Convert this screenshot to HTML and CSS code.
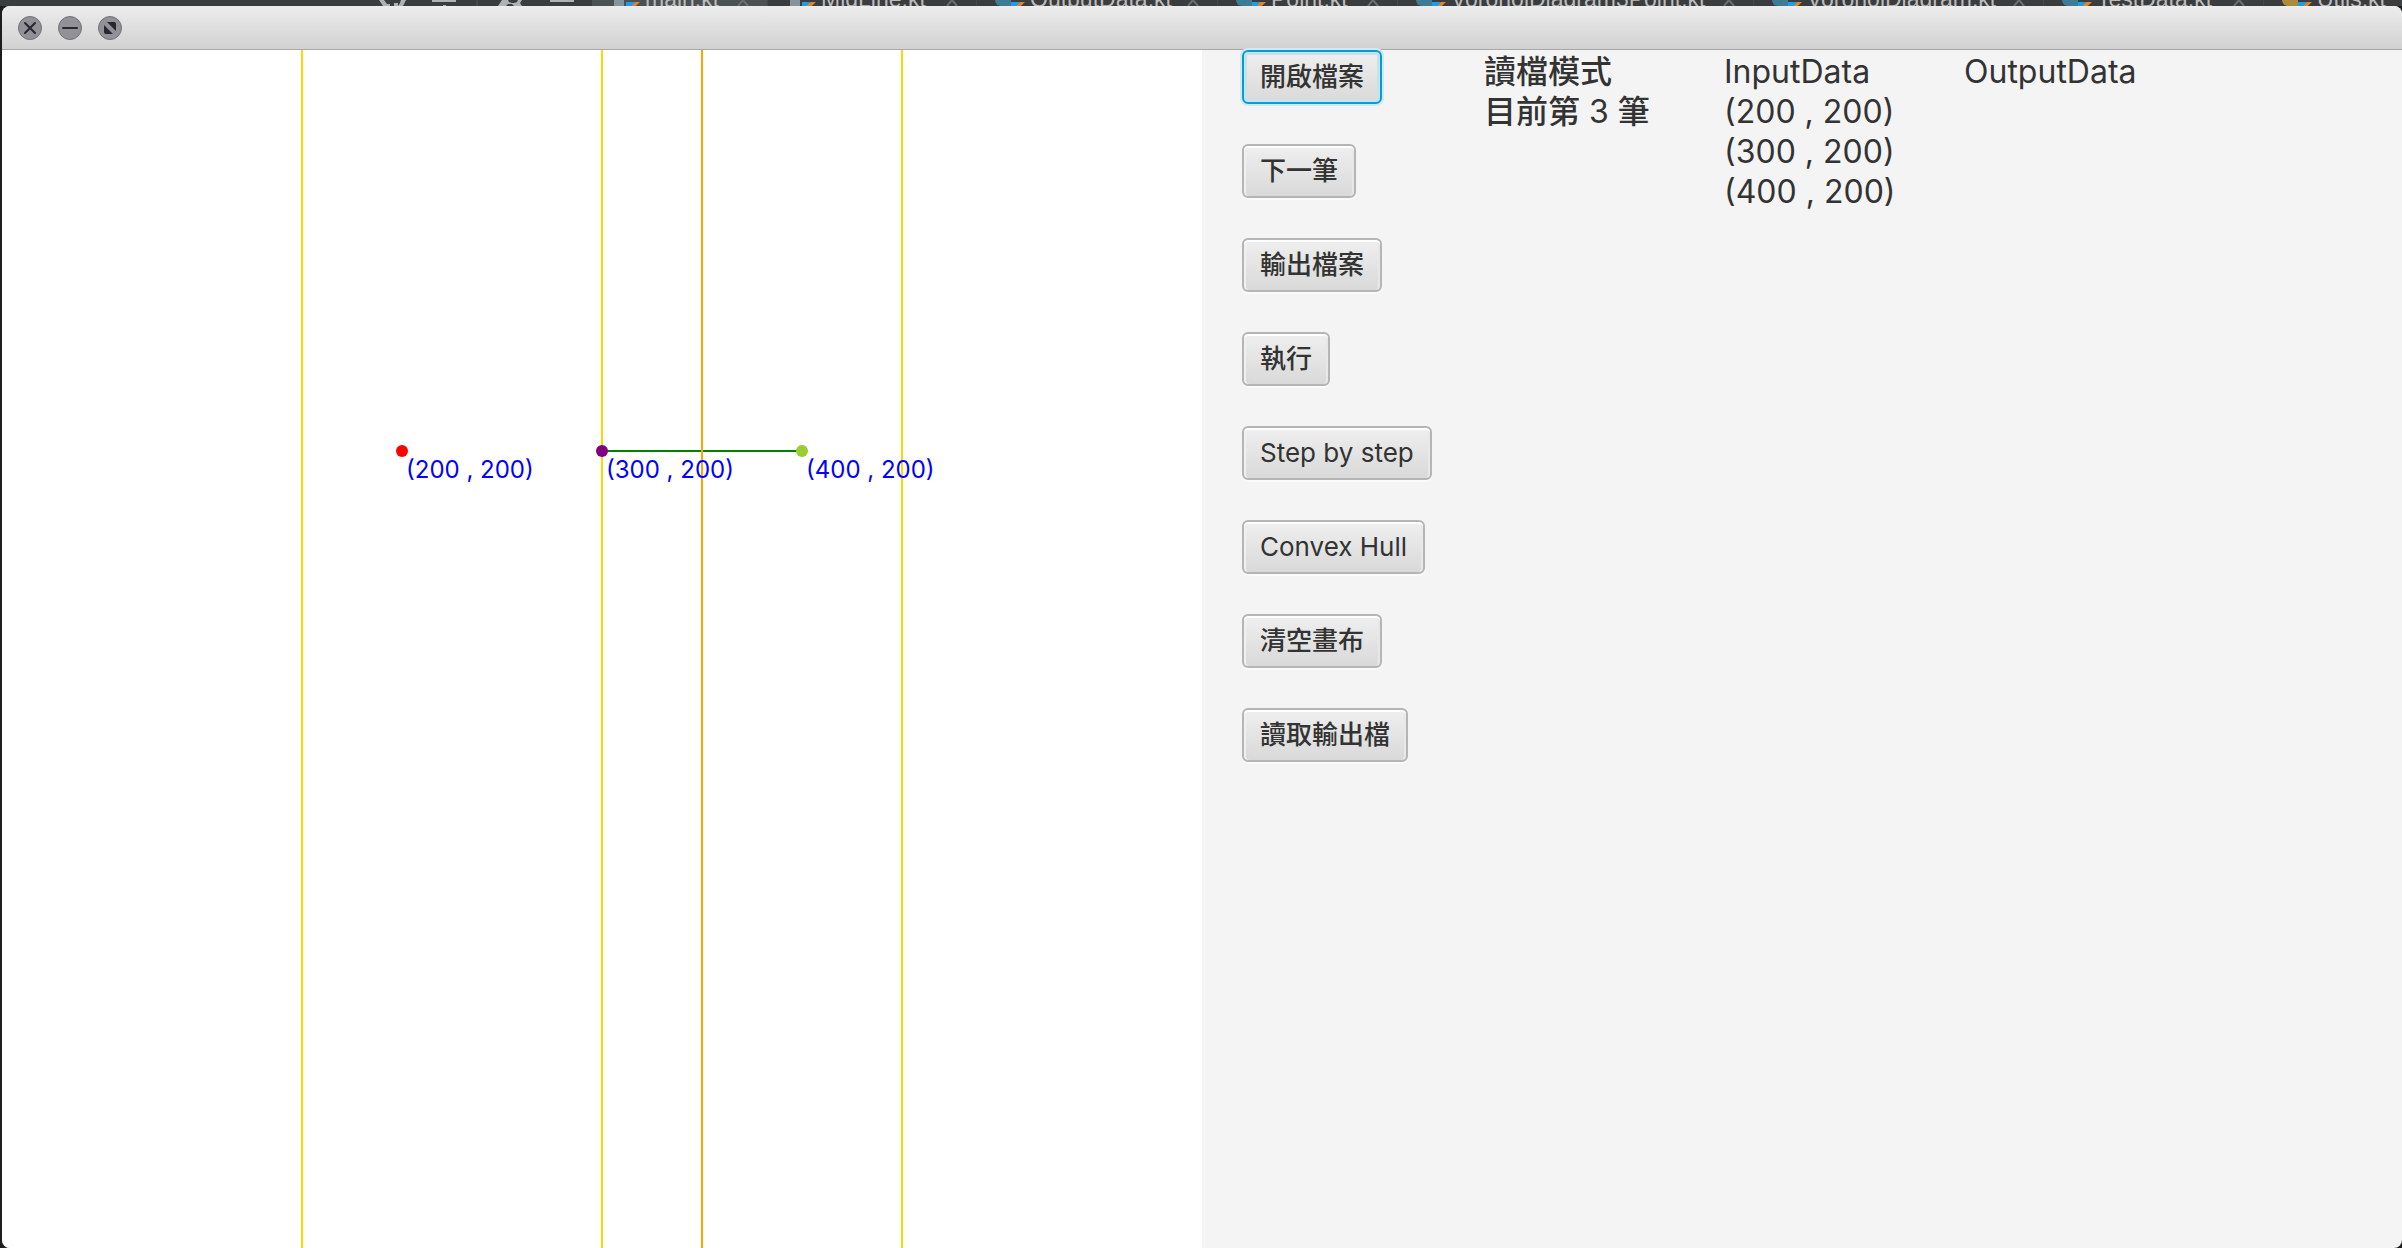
FILE: index.html
```html
<!DOCTYPE html>
<html lang="zh-Hant">
<head>
<meta charset="utf-8">
<title>Voronoi Diagram</title>
<link rel="stylesheet" href="styles.css">
</head>
<body>
<div class="editor" aria-hidden="true">
  <svg class="tools" width="592" height="6">
    <path d="M379 0h5l3 4h-2l3 2h-5zM401 0h5l-3 6h-5l2-3zM385 4h5v2h-5zM394 3h4v3h-4zM432 0h24v2h-24zM443 5h3v1h-3zM502 0h6l1 2 3 1h2l3-1 1-2h4l-2 3 2 3h-8l-2-2h-4l-2 2h-8l2-3zM550 0h24v2h-24z" fill="#afb1b3"/>
    <path d="M477 0v6" stroke="#505355"/>
  </svg>
  <div class="tab active"><i class="file"></i><i class="kt"></i><span>main.kt</span><svg class="close"><path d="M1 6L6 0L11 6"/></svg></div>
  <div class="tab"><i class="file"></i><i class="kt"></i><span>MidLine.kt</span><svg class="close"><path d="M1 6L6 0L11 6"/></svg></div>
  <div class="tab"><i class="class"></i><i class="kt"></i><span>OutputData.kt</span><svg class="close"><path d="M1 6L6 0L11 6"/></svg></div>
  <div class="tab"><i class="class"></i><i class="kt"></i><span>Point.kt</span><svg class="close"><path d="M1 6L6 0L11 6"/></svg></div>
  <div class="tab"><i class="class"></i><i class="kt"></i><span>VoronoiDiagram3Point.kt</span><svg class="close"><path d="M1 6L6 0L11 6"/></svg></div>
  <div class="tab"><i class="class"></i><i class="kt"></i><span>VoronoiDiagram.kt</span><svg class="close"><path d="M1 6L6 0L11 6"/></svg></div>
  <div class="tab"><i class="class"></i><i class="kt"></i><span>TestData.kt</span><svg class="close"><path d="M1 6L6 0L11 6"/></svg></div>
  <div class="tab"><i class="class object"></i><i class="kt"></i><span>Utils.kt</span></div>
</div>
<div class="window">
  <header class="titlebar">
    <button class="control" aria-label="Close"><svg viewBox="0 0 24 24"><path d="M7 7l10 10M17 7L7 17"/></svg></button>
    <button class="control" aria-label="Minimize"><svg viewBox="0 0 24 24"><path d="M5 12h14"/></svg></button>
    <button class="control" aria-label="Zoom"><svg viewBox="0 0 24 24"><path class="solid" d="M9 6h7q2 0 2 2v7zM6 9l9 9H8q-2 0-2-2z"/></svg></button>
  </header>
  <main class="content">
    <svg class="canvas">
      <g stroke-width="2">
        <path d="M300 0v2000M600 0v2000M900 0v2000" stroke="#ffd700"/>
        <path d="M600 401h200" stroke="#008000"/>
        <path d="M700 0v2000" stroke="#ffa500"/>
      </g>
      <circle cx="400" cy="401" r="6" fill="#ff0000"/>
      <circle cx="600" cy="401" r="6" fill="#800080"/>
      <circle cx="800" cy="401" r="6" fill="#9acd32"/>
      <text x="404" y="428">(200 , 200)</text>
      <text x="604" y="428">(300 , 200)</text>
      <text x="804" y="428">(400 , 200)</text>
    </svg>
    <section class="panel">
      <div class="actions">
        <button class="action zh focused">開啟檔案</button>
        <button class="action zh">下一筆</button>
        <button class="action zh">輸出檔案</button>
        <button class="action zh">執行</button>
        <button class="action">Step by step</button>
        <button class="action">Convex Hull</button>
        <button class="action zh">清空畫布</button>
        <button class="action zh">讀取輸出檔</button>
      </div>
      <div class="info"><span class="zh">讀檔模式</span><br><span class="zh">目前第</span> 3 <span class="zh">筆</span></div>
      <div class="info">InputData<br>(200 , 200)<br>(300 , 200)<br>(400 , 200)</div>
      <div class="info">OutputData</div>
    </section>
  </main>
</div>
</body>
</html>
```
FILE: styles.css
```css
* { box-sizing: border-box; }

body {
  margin: 0;
  height: 100vh;
  display: flex;
  flex-direction: column;
  overflow: hidden;
  background: #1c1d1e;
  font-family: Inter, "Noto Sans CJK TC", sans-serif;
  color: #333;
}

.editor {
  flex: none;
  height: 6px;
  display: grid;
  grid-template-columns: 592px 176px 209px 241px 180px 356px 290px 220px 1fr;
  overflow: hidden;
  background: #3a3c3e;
}

.tab {
  display: flex;
  height: 6px;
  padding-left: 18px;
  border-right: 1px solid #45484a;
  font: 23px/22px "Liberation Sans", sans-serif;
  color: #bbb;
  white-space: nowrap;
}

.tab.active { background: #4b5052; }
.tab span { margin: -12px auto 0 5px; }
.close {
  width: 12px;
  height: 6px;
  margin-right: 18px;
  fill: none;
  stroke: #6b6e70;
  stroke-width: 2;
}

.file, .class { flex: none; width: 10px; height: 6px; margin: 0 2px 0 4px; background: #87939a; }
.class { width: 16px; margin: 0; background: #3e7c96; border-bottom-left-radius: 6px; }
.object { background: #b08a3c; }
.kt {
  flex: none;
  width: 14px;
  height: 4px;
  margin-top: 2px;
  background: linear-gradient(135deg, #1c9cea 50%, #ef7f1a 50%);
  clip-path: polygon(0 0, 100% 0, 70% 100%, 0 100%);
}

.window {
  flex: 1;
  display: flex;
  flex-direction: column;
  margin-left: 2px;
  border-radius: 8px;
  overflow: hidden;
  background: #f4f4f4;
}

.titlebar {
  flex: none;
  display: flex;
  align-items: center;
  gap: 16px;
  height: 44px;
  padding-left: 16px;
  border-bottom: 1px solid #a8a8a8;
  background: linear-gradient(#ededed, #d1d1d1);
}

.control {
  width: 24px;
  height: 24px;
  padding: 0;
  border: 1px solid #737277;
  border-radius: 50%;
  background: #929197;
}

.control svg {
  display: block;
  width: 24px;
  height: 24px;
  margin: -1px;
  fill: none;
  stroke: #28272b;
  stroke-width: 2;
  stroke-linecap: round;
}

.control .solid { fill: #28272b; stroke: none; }

.content { flex: 1; display: grid; grid-template-columns: 1fr 1fr; }

.canvas { width: 100%; height: 100%; background: #fff; }
.canvas text { font-size: 24px; fill: #0000ff; }

.panel {
  display: grid;
  grid-template-columns: 242px 240px 240px 1fr;
  padding-left: 40px;
}

.actions { display: flex; flex-direction: column; align-items: flex-start; gap: 40px; }

.action {
  height: 54px;
  padding: 0 16px;
  border: 2px solid #b5b5b5;
  border-radius: 6px;
  background: linear-gradient(#efefef, #d9d9d9);
  box-shadow: inset 0 2px #fff, inset 2px 0 #f0f0f0, inset -2px 0 #e8e8e8, 0 2px #fafafa;
  font: 26px/32px Inter, "Noto Sans CJK TC", sans-serif;
  color: #333;
}

.zh { font-weight: 500; }

.action.focused {
  border-color: #039ed3;
  box-shadow: inset 0 0 0 3px #c9e1ea, 0 0 0 2px #d0e9f2;
}

.info { padding-top: 2px; font-size: 32px; line-height: 40px; white-space: nowrap; }
```
